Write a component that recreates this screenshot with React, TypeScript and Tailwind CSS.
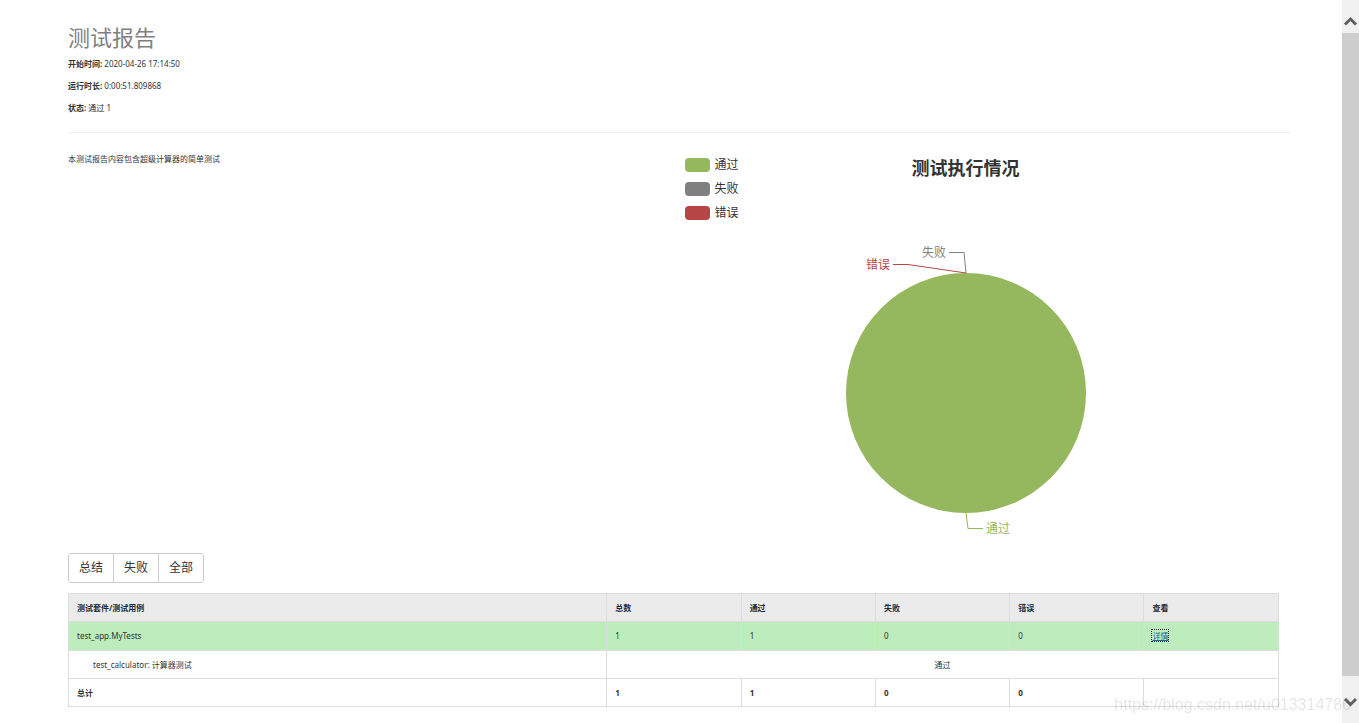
const COUNTS = ['1', '1', '0', '0']

const HEADERS = ['总数', '通过', '失败', '错误', '查看']

const META = [
  { label: '开始时间:', value: '2020-04-26 17:14:50' },
  { label: '运行时长:', value: '0:00:51.809868' },
  { label: '状态:', value: '通过 1' },
]

const LEGEND = [
  { label: '通过', swatch: 'bg-[#95b75d]' },
  { label: '失败', swatch: 'bg-[#808080]' },
  { label: '错误', swatch: 'bg-[#b64645]' },
]

const CELL = 'border border-[#ddd] px-2 py-0'

function ReportHeader() {
  return (
    <header className="border-b border-[#eee] pb-[18px]">
      <h1 className="text-[22px] leading-6 text-[#808080]">测试报告</h1>
      <div className="mt-[9px] flex flex-col gap-[10px]">
        {META.map((m) => (
          <p key={m.label}>
            <strong>{m.label}</strong> {m.value}
          </p>
        ))}
      </div>
    </header>
  )
}

function ResultChart() {
  return (
    <figure className="relative h-[400px] w-[572px]">
      <figcaption className="pt-[3px] text-center text-[18px] leading-6 font-bold text-[#333]">
        测试执行情况
      </figcaption>
      <ul className="absolute top-[5px] left-[5px] flex flex-col gap-[10px]">
        {LEGEND.map((l) => (
          <li key={l.label} className="flex items-center gap-[5px] text-[12px] leading-[14px] text-[#333]">
            <span className={`h-[14px] w-[25px] rounded-[4px] ${l.swatch}`} />
            {l.label}
          </li>
        ))}
      </ul>
      <svg viewBox="0 0 572 400" className="absolute inset-0 h-full w-full text-[12px]" fill="none">
        <circle cx="286" cy="240" r="120" fill="#95b75d" />
        <path d="M286 120 L284 99.5 H269" stroke="#808080" />
        <path d="M286 120 L228 111.5 H213" stroke="#b64645" />
        <path d="M286 360 L288 375.5 H303" stroke="#95b75d" />
        <text x="266" y="104" textAnchor="end" fill="#808080">失败</text>
        <text x="210" y="116" textAnchor="end" fill="#b64645">错误</text>
        <text x="306" y="380" fill="#95b75d">通过</text>
      </svg>
    </figure>
  )
}

function Filters() {
  return (
    <div className="flex text-[12px] text-[#333]">
      <button type="button" className="h-[30px] w-[46px] rounded-l-[3px] border border-[#ccc] bg-white">
        总结
      </button>
      <button type="button" className="-ml-px h-[30px] w-[46px] border border-[#ccc] bg-white">
        失败
      </button>
      <button type="button" className="-ml-px h-[30px] w-[46px] rounded-r-[3px] border border-[#ccc] bg-white">
        全部
      </button>
    </div>
  )
}

function ResultTable() {
  return (
    <table className="mt-[10px] w-[99%] table-fixed border-collapse text-left">
      <thead>
        <tr className="h-7 bg-[#ebebeb] text-[#222b3c]">
          <th className={`${CELL} w-[44.5%]`}>测试套件/测试用例</th>
          {HEADERS.map((h) => (
            <th key={h} className={CELL}>{h}</th>
          ))}
        </tr>
      </thead>
      <tbody>
        <tr className="h-[29px] bg-[#bdedbc]">
          <td className={CELL}>test_app.MyTests</td>
          {COUNTS.map((c, i) => (
            <td key={i} className={CELL}>{c}</td>
          ))}
          <td className={CELL}>
            <a href="#detail" className="text-[#23649c] underline outline-1 outline-dotted outline-[#302040]">
              详情
            </a>
          </td>
        </tr>
        <tr className="h-7">
          <td className={CELL}>
            <div className="pl-4">test_calculator: 计算器测试</div>
          </td>
          <td colSpan={5} className={`${CELL} text-center`}>通过</td>
        </tr>
        <tr className="h-7 font-bold">
          <td className={CELL}>总计</td>
          {COUNTS.map((c, i) => (
            <td key={i} className={CELL}>{c}</td>
          ))}
          <td className={CELL} />
        </tr>
      </tbody>
    </table>
  )
}

function Scrollbar() {
  return (
    <div aria-hidden="true" className="flex w-[17px] shrink-0 flex-col bg-[#f0f0f0]">
      <svg viewBox="0 0 17 33" className="h-[33px]" fill="none" stroke="#606060" strokeWidth="3">
        <path d="M3 24.5 L8.5 19 L14 24.5" />
      </svg>
      <div className="flex-1 bg-[#cdcdcd]" />
      <svg viewBox="0 0 17 47" className="h-[47px]" fill="none" stroke="#606060" strokeWidth="3">
        <path d="M3 23 L8.5 28.5 L14 23" />
      </svg>
    </div>
  )
}

export default function App() {
  return (
    <div className="flex min-h-screen bg-white font-['Noto_Sans','Noto_Sans_CJK_SC',sans-serif] text-[8px] leading-3 text-[#333]">
      <main className="min-w-0 flex-1 pt-[25px] pr-[51px] pl-[68px]">
        <ReportHeader />
        <section className="mt-5 grid grid-cols-2">
          <p>本测试报告内容包含超级计算器的简单测试</p>
          <ResultChart />
        </section>
        <Filters />
        <ResultTable />
      </main>
      <Scrollbar />
      <div className="pointer-events-none fixed right-2 bottom-[9px] font-['Liberation_Sans',sans-serif] text-[16px] leading-[18px] text-black/10">
        https://blog.csdn.net/u013314786
      </div>
    </div>
  )
}
